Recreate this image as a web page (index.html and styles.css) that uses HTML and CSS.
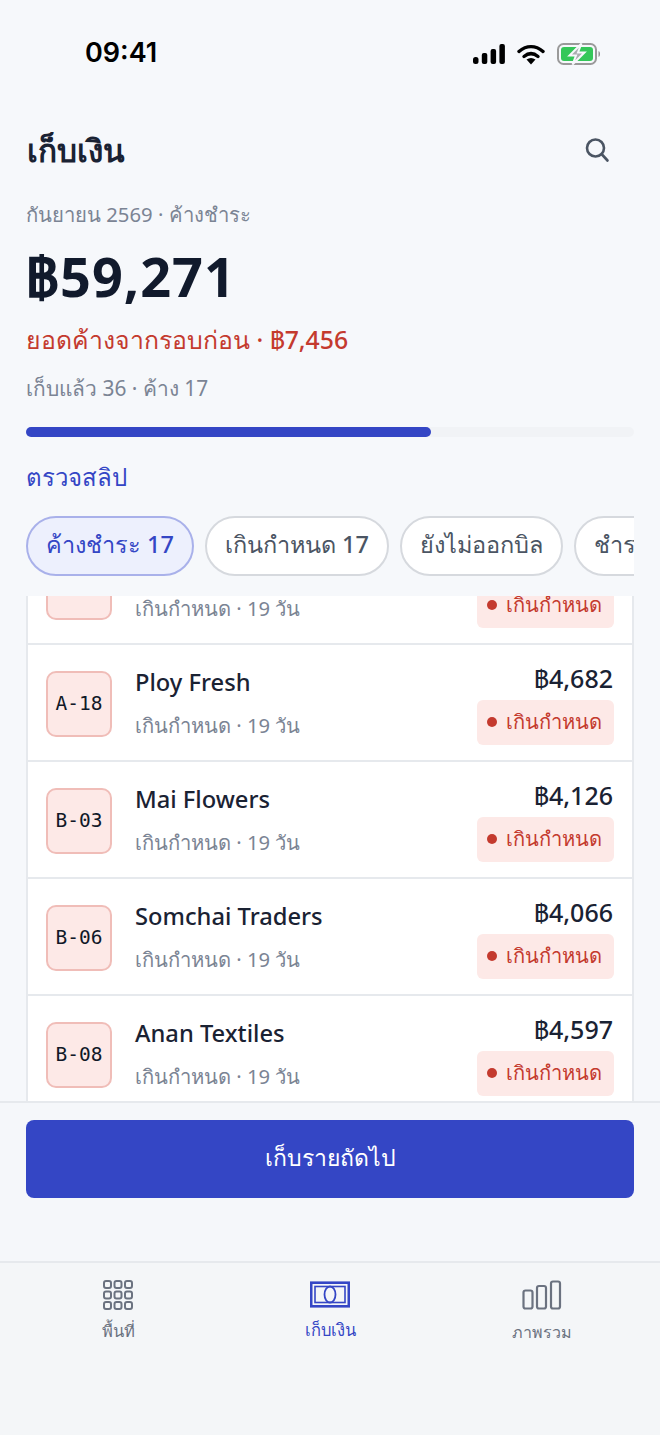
FILE: index.html
```html
<!DOCTYPE html>
<html lang="th">
<head>
<meta charset="utf-8">
<title>เก็บเงิน</title>
<link rel="stylesheet" href="styles.css">
</head>
<body>
<div class="app">
  <div class="status">
    <span class="time">09:41</span>
    <span class="status-icons">
      <svg width="32" height="20" viewBox="0 0 32 20"><g fill="#000"><rect x="0" y="13" width="5.500" height="7" rx="2.500"/><rect x="8.800" y="9" width="5.500" height="11" rx="2"/><rect x="17.600" y="5" width="5.500" height="15" rx="2"/><rect x="26.400" y="0" width="5.500" height="20" rx="2"/></g></svg>
      <svg width="28" height="21" viewBox="0 0 28 21"><g fill="none" stroke="#000" stroke-width="3.400" stroke-linecap="round"><path d="M2 7.500C9.500 1 18.500 1 26 7.500"/><path d="M7 12.500C11.500 8.800 16.500 8.800 21 12.500"/></g><path d="M9.500 15.500C12.500 13.500 15.500 13.500 18.500 15.500L14 20.500Z" fill="#000"/></svg>
      <svg width="45" height="22" viewBox="0 0 45 22"><rect x="1" y="1" width="38" height="20" rx="5.500" fill="none" stroke="#9a9a9a" stroke-width="2"/><rect x="4" y="4" width="32" height="14" rx="3" fill="#34c759"/><path d="M41.500 8c2 .5 2 5.500 0 6z" fill="#8f8f8f"/><path d="M24.500 0.500 12.500 12.500h6.500L15.500 21.500 27.500 9.500h-6.500z" fill="#a9adb0" stroke="#f6f8fb" stroke-width="2"/></svg>
    </span>
  </div>

  <header class="title-row">
    <h1 class="title">เก็บเงิน</h1>
    <svg class="search" width="26" height="26" viewBox="0 0 26 26" fill="none" stroke="#4b5563" stroke-width="2.600" stroke-linecap="round"><circle cx="11.500" cy="11" r="8.500"/><path d="M18 17.500l5.500 6"/></svg>
  </header>

  <section class="summary">
    <p class="period">กันยายน 2569 · ค้างชำระ</p>
    <p class="amount">฿59,271</p>
    <p class="overdue">ยอดค้างจากรอบก่อน · ฿7,456</p>
    <p class="progress-text">เก็บแล้ว 36 · ค้าง 17</p>
    <div class="track"><div class="fill" style="width:66.600%"></div></div>
    <a class="link">ตรวจสลิป</a>
  </section>

  <nav class="chips">
    <span class="chip chip-active">ค้างชำระ 17</span>
    <span class="chip">เกินกำหนด 17</span>
    <span class="chip">ยังไม่ออกบิล</span>
    <span class="chip">ชำระแล้ว 36</span>
  </nav>

  <main class="list-view">
    <ul class="list">
      <li class="row">
        <span class="unit"></span>
        <div class="info"><span class="name">&nbsp;</span><span class="meta">เกินกำหนด · 19 วัน</span></div>
        <div class="right"><span class="price">&nbsp;</span><span class="badge"><i class="dot"></i>เกินกำหนด</span></div>
      </li>
      <li class="row">
        <span class="unit">A-18</span>
        <div class="info"><span class="name">Ploy Fresh</span><span class="meta">เกินกำหนด · 19 วัน</span></div>
        <div class="right"><span class="price">฿4,682</span><span class="badge"><i class="dot"></i>เกินกำหนด</span></div>
      </li>
      <li class="row">
        <span class="unit">B-03</span>
        <div class="info"><span class="name">Mai Flowers</span><span class="meta">เกินกำหนด · 19 วัน</span></div>
        <div class="right"><span class="price">฿4,126</span><span class="badge"><i class="dot"></i>เกินกำหนด</span></div>
      </li>
      <li class="row">
        <span class="unit">B-06</span>
        <div class="info"><span class="name">Somchai Traders</span><span class="meta">เกินกำหนด · 19 วัน</span></div>
        <div class="right"><span class="price">฿4,066</span><span class="badge"><i class="dot"></i>เกินกำหนด</span></div>
      </li>
      <li class="row">
        <span class="unit">B-08</span>
        <div class="info"><span class="name">Anan Textiles</span><span class="meta">เกินกำหนด · 19 วัน</span></div>
        <div class="right"><span class="price">฿4,597</span><span class="badge"><i class="dot"></i>เกินกำหนด</span></div>
      </li>
    </ul>
  </main>

  <div class="action">
    <button class="primary"><span class="primary-label">เก็บรายถัดไป</span></button>
  </div>

  <footer class="tabs">
    <div class="tab">
      <svg width="32" height="32" viewBox="0 0 32 32" fill="none" stroke="#6b7280" stroke-width="2"><rect x="2" y="2" width="7" height="7" rx="2"/><rect x="12.500" y="2" width="7" height="7" rx="2"/><rect x="23" y="2" width="7" height="7" rx="2"/><rect x="2" y="12.500" width="7" height="7" rx="2"/><rect x="12.500" y="12.500" width="7" height="7" rx="2"/><rect x="23" y="12.500" width="7" height="7" rx="2"/><rect x="2" y="23" width="7" height="7" rx="2"/><rect x="12.500" y="23" width="7" height="7" rx="2"/><rect x="23" y="23" width="7" height="7" rx="2"/></svg>
      <span class="tab-label">พื้นที่</span>
    </div>
    <div class="tab tab-active">
      <svg width="40" height="31" viewBox="0 0 40 26" fill="none" stroke="#3446c5"><rect x="1.200" y="1.200" width="37.600" height="23.600" stroke-width="2.600"/><rect x="5" y="5" width="30" height="16" stroke-width="1.600"/><ellipse cx="20" cy="13" rx="5.500" ry="8" stroke-width="1.800"/></svg>
      <span class="tab-label">เก็บเงิน</span>
    </div>
    <div class="tab">
      <svg width="40" height="33" viewBox="0 0 40 30" fill="none" stroke="#6b7280" stroke-width="2.200"><rect x="1.500" y="10" width="9" height="18" rx="2"/><rect x="15" y="5.500" width="9" height="22.500" rx="2"/><rect x="29" y="1" width="9" height="27" rx="2"/></svg>
      <span class="tab-label tab-label-wide">ภาพรวม</span>
    </div>
  </footer>
</div>
</body>
</html>
```

FILE: styles.css
```css
* { box-sizing: border-box; }
html, body { margin: 0; padding: 0; }
body {
  background: #f6f8fb;
  font-family: "Noto Sans", "Liberation Sans", sans-serif;
  color: #111827;
}
.app {
  width: 660px;
  height: 1435px;
  display: flex;
  flex-direction: column;
  overflow: hidden;
}
p, h1, ul { margin: 0; padding: 0; }

.status {
  height: 108px;
  padding: 34px 58px 0 85px;
  display: flex;
  justify-content: space-between;
  align-items: flex-start;
  flex: none;
}
.time {
  font: 600 27px/38px "Inter", sans-serif;
  color: #000;
}
.status-icons {
  display: flex;
  align-items: center;
  gap: 12px;
  height: 40px;
}

.title-row {
  height: 84px;
  padding: 0 50px 0 27px;
  display: flex;
  justify-content: space-between;
  align-items: center;
  flex: none;
}
.title {
  font-size: 31.500px;
  line-height: 82px;
  font-weight: 600;
  color: #1a2233;
}

.summary {
  padding: 0 26px;
  display: flex;
  flex-direction: column;
  align-items: flex-start;
  flex: none;
}
.period {
  margin-top: 7px;
  font-size: 20.300px;
  line-height: 30px;
  color: #7b8494;
}
.amount {
  margin-top: 12px;
  font-size: 54px;
  line-height: 70px;
  font-weight: 700;
  color: #111a2c;
  letter-spacing: 1px;
}
.overdue {
  margin-top: 11px;
  font-size: 24.800px;
  line-height: 34px;
  font-weight: 500;
  color: #c43a2e;
}
.progress-text {
  margin-top: 17px;
  font-size: 20.900px;
  line-height: 30px;
  color: #7b8494;
}
.track {
  margin-top: 24px;
  width: 100%;
  height: 10px;
  border-radius: 5px;
  background: #f1f3f6;
}
.fill {
  height: 100%;
  border-radius: 5px;
  background: #3446c5;
}
.link {
  margin-top: 22px;
  font-size: 24px;
  line-height: 36px;
  font-weight: 500;
  color: #3446c5;
}

.chips {
  margin: 21px 26px 0;
  display: flex;
  gap: 11px;
  overflow: hidden;
  flex: none;
  height: 60px;
}
.chip {
  flex: none;
  height: 60px;
  border-radius: 30px;
  padding: 0 18px;
  border: 2px solid #d6d9de;
  background: #fff;
  font-size: 23.500px;
  line-height: 53px;
  font-weight: 500;
  color: #4b5563;
}
.chip-active {
  border-color: #a9b1ea;
  background: #edf0fd;
  color: #3446c5;
}

.list-view {
  margin: 20px 26px 0;
  height: 505px;
  overflow: hidden;
  flex: none;
}
.list {
  list-style: none;
  margin-top: -68px;
  border-left: 2px solid #e6e9ed;
  border-right: 2px solid #e6e9ed;
  background: #fff;
}
.row {
  height: 117px;
  padding: 0 18px;
  display: flex;
  align-items: center;
  border-bottom: 2px solid #e6e9ed;
}
.unit {
  flex: none;
  width: 66px;
  height: 66px;
  margin-top: 2px;
  border: 2px solid #f0bdb8;
  border-radius: 10px;
  background: #fde9e7;
  font: 500 19.500px/62px "DejaVu Sans Mono", "Liberation Mono", monospace;
  text-align: center;
  color: #111827;
}
.info {
  margin-left: 23px;
  flex: 1;
  display: flex;
  flex-direction: column;
  gap: 11px;
}
.name {
  font-size: 23.700px;
  line-height: 34px;
  font-weight: 500;
  color: #1a2233;
}
.meta {
  font-size: 20.200px;
  line-height: 30px;
  color: #7b8494;
}
.right {
  display: flex;
  flex-direction: column;
  align-items: flex-end;
  gap: 5px;
}
.price {
  font-size: 25px;
  line-height: 34px;
  font-weight: 500;
  color: #1a2233;
  padding-right: 1px;
}
.badge {
  width: 137px;
  height: 45px;
  border-radius: 6px;
  background: #fde9e7;
  display: flex;
  align-items: center;
  padding-left: 10px;
  gap: 9px;
  font-size: 20.100px;
  font-weight: 500;
  color: #c43a2e;
}
.dot {
  width: 10px;
  height: 10px;
  border-radius: 50%;
  background: #c43a2e;
}

.action {
  height: 160px;
  border-top: 2px solid #e6e9ed;
  padding: 17px 26px 0;
  flex: none;
  background: #f5f7fa;
}
.primary {
  display: block;
  width: 100%;
  height: 78px;
  border: 0;
  padding: 0 0 4px;
  border-radius: 8px;
  background: #3446c5;
  color: #fff;
  font: 500 23px/34px "Noto Sans", sans-serif;
}

.tabs {
  flex: 1;
  border-top: 2px solid #e6e9ed;
  background: #f4f6f8;
  display: grid;
  grid-template-columns: 236px 188px 236px;
}
.tab {
  display: flex;
  flex-direction: column;
  align-items: center;
  padding-top: 16px;
  gap: 7px;
}
.tab-label {
  font-size: 16.500px;
  line-height: 26px;
  font-weight: 500;
  color: #6b7280;
}
.tab-label-wide { font-size: 16px; }
.tab-active .tab-label { color: #3446c5; }
```
